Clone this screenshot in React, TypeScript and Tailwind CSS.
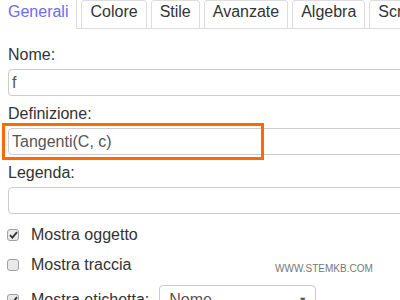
import React from "react";

const font = { fontFamily: '"Liberation Sans", Arial, sans-serif' };

function Tab({ label }: { label: string }) {
  return (
    <div className="ml-[4px] h-[29px] shrink-0 rounded-t-[3px] border border-[#dddddd] bg-white px-[8px] pt-[2px] text-[16px] leading-[18px] text-[#333333]">
      {label}
    </div>
  );
}

function Field({ label, value, first }: { label: string; value: string; first?: boolean }) {
  return (
    <div className={first ? "mt-[17px]" : "mt-[9px]"}>
      <div className="h-[18px] text-[16px] leading-[18px] text-[#333333]">{label}</div>
      <div className="mt-[5px] flex h-[27px] w-[410px] items-center rounded-[4px] border border-[#cccccc] bg-white pl-[3px] text-[16px] text-[#555555]">
        {value}
      </div>
    </div>
  );
}

function Check({ checked }: { checked?: boolean }) {
  return (
    <span className="flex h-[12px] w-[12px] shrink-0 items-center justify-center rounded-[3px] border border-[#a0a0a0] bg-[#e9e9e9]">
      {checked && (
        <svg width="9" height="8" viewBox="0 0 9 8">
          <path d="M1 4.2 L3.4 6.6 L8 1.2" stroke="#333" strokeWidth="1.8" fill="none" />
        </svg>
      )}
    </span>
  );
}

export default function App() {
  return (
    <div className="relative h-[300px] w-[400px] overflow-hidden bg-white" style={font}>
      <div className="flex h-[29px] items-start border-b border-[#dddddd]">
        <div className="relative z-10 h-[29px] shrink-0 border-r border-[#dddddd] bg-white px-[8px] pt-[3px] text-[16px] leading-[18px] text-[#6b6bf0]">
          Generali
        </div>
        <Tab label="Colore" />
        <Tab label="Stile" />
        <Tab label="Avanzate" />
        <Tab label="Algebra" />
        <Tab label="Script" />
      </div>
      <div className="pl-[8px]">
        <Field first label="Nome:" value="f" />
        <Field label="Definizione:" value="Tangenti(C, c)" />
        <Field label="Legenda:" value="" />
        <div className="mt-[12px] flex h-[18px] items-center text-[16px] leading-[18px] text-[#333333]">
          <span className="-ml-[1px]"><Check checked /></span>
          <span className="ml-[12px]">Mostra oggetto</span>
        </div>
        <div className="mt-[12px] flex h-[18px] items-center text-[16px] leading-[18px] text-[#333333]">
          <span className="-ml-[1px]"><Check /></span>
          <span className="ml-[12px]">Mostra traccia</span>
        </div>
        <div className="mt-[11px] flex items-center text-[16px] leading-[18px] text-[#333333]">
          <span className="-ml-[1px]"><Check checked /></span>
          <span className="ml-[12px]">Mostra etichetta:</span>
          <div className="ml-[10px] flex h-[30px] w-[157px] items-center justify-between rounded-[4px] border border-[#cccccc] pl-[9px] pr-[8px] text-[#555555]">
            <span>Nome</span>
            <span className="text-[9px]">▼</span>
          </div>
        </div>
      </div>
      <div className="absolute left-[275px] top-[263px] text-[10px] leading-[12px] text-[#777777]">
        WWW.STEMKB.COM
      </div>
      <div className="pointer-events-none absolute left-[2px] top-[123px] h-[37px] w-[262px] border-[3px] border-[#ff6a00]" />
    </div>
  );
}
